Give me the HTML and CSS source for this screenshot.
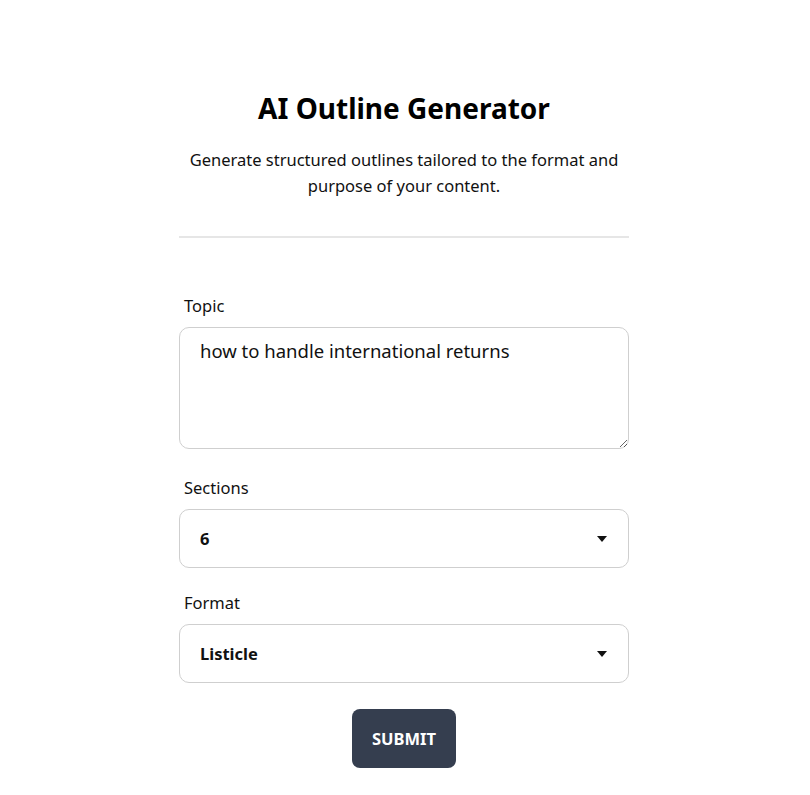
FILE: index.html
```html
<!DOCTYPE html>
<html lang="en">
<head>
<meta charset="utf-8">
<title>AI Outline Generator</title>
<link rel="stylesheet" href="styles.css">
</head>
<body>
<main class="page">
  <header class="intro">
    <h1 class="title">AI Outline Generator</h1>
    <p class="subtitle">Generate structured outlines tailored to the format and purpose of your content.</p>
  </header>
  <hr class="divider">
  <form class="form">
    <div class="field field-topic">
      <label class="label" for="topic">Topic</label>
      <textarea id="topic" class="textarea">how to handle international returns</textarea>
    </div>
    <div class="field">
      <label class="label" for="sections">Sections</label>
      <div class="select-wrap">
        <select id="sections" class="select">
          <option>6</option>
        </select>
      </div>
    </div>
    <div class="field">
      <label class="label" for="format">Format</label>
      <div class="select-wrap">
        <select id="format" class="select">
          <option>Listicle</option>
        </select>
      </div>
    </div>
    <div class="actions">
      <button type="button" class="submit">SUBMIT</button>
    </div>
  </form>
</main>
</body>
</html>
```
FILE: styles.css
```css
* { box-sizing: border-box; }
html, body { margin: 0; padding: 0; background: #fff; }
body {
  font-family: "Noto Sans", "Open Sans", sans-serif;
  color: #111;
}
.page {
  width: 450px;
  margin: 0 auto;
  padding-top: 88px;
  position: relative;
  left: -1px;
}
.intro { text-align: center; }
.title {
  margin: 0;
  font-size: 28px;
  line-height: 40px;
  font-weight: 700;
  color: #000;
}
.subtitle {
  margin: 19px 0 0;
  font-size: 16.5px;
  line-height: 26px;
  color: #111;
  padding: 0 8px;
}
.divider {
  border: 0;
  border-top: 2px solid #e6e6e6;
  margin: 37px 0 0;
}
.form {
  padding-top: 56px;
  display: flex;
  flex-direction: column;
}
.field {
  display: flex;
  flex-direction: column;
  margin-bottom: 23px;
}
.field-topic { margin-bottom: 27px; }
.label {
  font-size: 16.5px;
  line-height: 24px;
  padding-left: 5px;
  margin-bottom: 9px;
  color: #111;
}
.textarea {
  width: 100%;
  height: 122px;
  border: 1px solid #cfcfcf;
  border-radius: 10px;
  padding: 10px 20px;
  font-family: inherit;
  font-size: 18.5px;
  line-height: 26px;
  color: #111;
  resize: vertical;
  outline: none;
}
.select-wrap { position: relative; }
.select-wrap::after {
  content: "";
  position: absolute;
  right: 22px;
  top: 50%;
  margin-top: -3px;
  border-left: 5.5px solid transparent;
  border-right: 5.5px solid transparent;
  border-top: 6px solid #111;
}
.select {
  width: 100%;
  height: 59px;
  appearance: none;
  -webkit-appearance: none;
  background: #fff;
  border: 1px solid #cfcfcf;
  border-radius: 10px;
  padding: 0 20px;
  font-family: inherit;
  font-size: 16.5px;
  font-weight: 700;
  color: #111;
  outline: none;
}
.actions {
  display: flex;
  justify-content: center;
  margin-top: 3px;
}
.submit {
  width: 104px;
  height: 59px;
  border: 0;
  border-radius: 8px;
  background: #353e4f;
  color: #fff;
  font-family: inherit;
  font-size: 16.5px;
  font-weight: 700;
  letter-spacing: 0;
}
```
